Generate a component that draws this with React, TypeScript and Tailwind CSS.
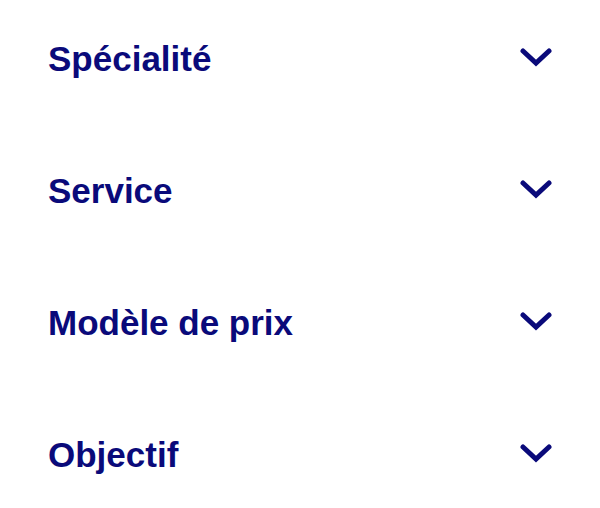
import React from "react";

const items = ["Spécialité", "Service", "Modèle de prix", "Objectif"];

function Chevron() {
  return (
    <svg width="32" height="22" viewBox="0 0 32 22" fill="none" className="shrink-0">
      <path d="M3 4 L16 16 L29 4" stroke="#0a0a7a" strokeWidth="5" strokeLinecap="round" strokeLinejoin="miter" />
    </svg>
  );
}

export default function App() {
  return (
    <div className="w-[600px] h-[508px] bg-white pt-[24px] px-[48px] flex flex-col gap-[64px]" style={{ fontFamily: '"Liberation Sans", Arial, sans-serif' }}>
      {items.map((t) => (
        <div key={t} className="h-[68px] flex items-center justify-between">
          <span className="text-[35px] font-bold text-[#0a0a7a] leading-none">{t}</span>
          <Chevron />
        </div>
      ))}
    </div>
  );
}
